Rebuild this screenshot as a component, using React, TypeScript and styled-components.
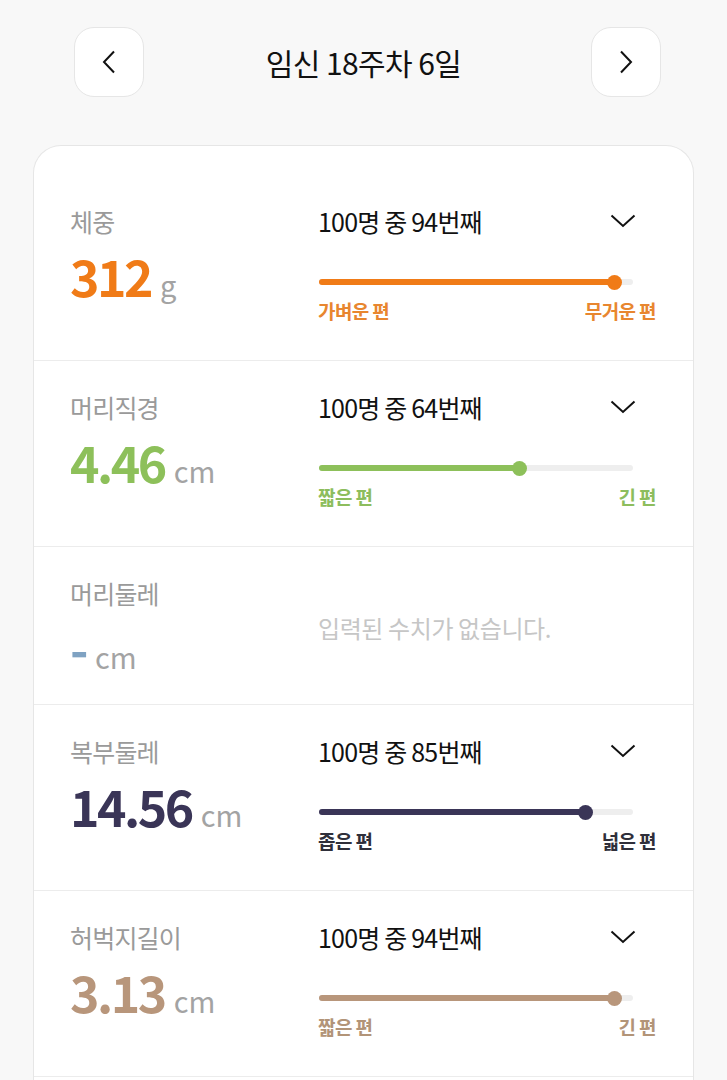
import React from "react";
import styled, { createGlobalStyle } from "styled-components";

const GlobalStyle = createGlobalStyle`
  html, body {
    margin: 0;
    padding: 0;
    background: #f8f8f8;
    font-family: "Noto Sans CJK KR", "Noto Sans", sans-serif;
    color: #111;
  }
  * { box-sizing: border-box; }
`;

const Page = styled.div`
  width: 727px;
  min-height: 1080px;
  overflow: hidden;
`;

const Header = styled.header`
  display: flex;
  align-items: center;
  justify-content: space-between;
  padding: 27px 66px 0 74px;
`;

const NavButton = styled.button`
  width: 70px;
  height: 70px;
  border-radius: 20px;
  background: #ffffff;
  border: 1.5px solid #e6e6e6;
  display: flex;
  align-items: center;
  justify-content: center;
  padding: 0;
  cursor: pointer;
`;

const Title = styled.h1`
  margin: 0 8px 0 0;
  font-size: 30px;
  font-weight: 400;
  letter-spacing: -0.6px;
  color: #111;
  line-height: 40px;
`;

const Card = styled.section`
  margin: 48px 0 0 33px;
  width: 661px;
  background: #ffffff;
  border: 1.5px solid #e6e6e6;
  border-bottom: none;
  border-radius: 28px 28px 0 0;
  padding: 29px 0 60px;
`;

const Row = styled.div`
  display: grid;
  grid-template-columns: 248px 1fr;
  padding: 29px 37px 26px 36px;
  border-bottom: 1.5px solid #ececec;
`;

const LeftCol = styled.div`
  display: flex;
  flex-direction: column;
`;

const Label = styled.div`
  font-size: 25px;
  letter-spacing: -0.8px;
  line-height: 34px;
  color: #9a9a9a;
`;

const ValueLine = styled.div`
  margin-top: 15px;
  display: flex;
  align-items: baseline;
  gap: 9px;
  line-height: 44px;
`;

const Value = styled.span<{ $color: string }>`
  font-size: 50px;
  font-weight: 700;
  letter-spacing: -2.5px;
  color: ${(p) => p.$color};
`;

const Unit = styled.span`
  font-size: 29px;
  font-weight: 400;
  color: #a3a3a3;
`;

const RightCol = styled.div`
  display: flex;
  flex-direction: column;
  padding-bottom: 10px;
`;

const RankHeader = styled.div`
  display: flex;
  align-items: center;
  justify-content: space-between;
  height: 34px;
  padding-right: 20px;
`;

const RankText = styled.span`
  font-size: 25px;
  letter-spacing: -0.8px;
  color: #111;
`;

const TrackWrap = styled.div`
  margin-top: 34px;
  height: 20px;
  display: flex;
  align-items: center;
  padding-left: 1px;
  padding-right: 23px;
`;

const Track = styled.div`
  position: relative;
  flex: 1;
  height: 6px;
  border-radius: 3px;
  background: #eeeeee;
`;

const Fill = styled.div<{ $color: string }>`
  position: absolute;
  left: 0;
  top: 0;
  height: 6px;
  border-radius: 3px;
  background: ${(p) => p.$color};
`;

const Knob = styled.div<{ $color: string }>`
  position: absolute;
  top: 50%;
  width: 15px;
  height: 15px;
  margin: -7.5px 0 0 -7.5px;
  border-radius: 50%;
  background: ${(p) => p.$color};
`;

const Ends = styled.div<{ $color: string }>`
  margin-top: 6px;
  display: flex;
  justify-content: space-between;
  font-size: 19px;
  font-weight: 700;
  letter-spacing: -0.6px;
  line-height: 26px;
  color: ${(p) => p.$color};
`;

const Empty = styled.div`
  align-self: center;
  font-size: 24px;
  letter-spacing: -0.4px;
  color: #c6c6c6;
`;

const ChevronLeft = () => (
  <svg width="14" height="24" viewBox="0 0 14 24" fill="none">
    <path d="M12 1.5 L2 12 L12 22.5" stroke="#111" strokeWidth="2" strokeLinejoin="miter" />
  </svg>
);

const ChevronRight = () => (
  <svg width="14" height="24" viewBox="0 0 14 24" fill="none">
    <path d="M2 1.5 L12 12 L2 22.5" stroke="#111" strokeWidth="2" strokeLinejoin="miter" />
  </svg>
);

const ChevronDown = () => (
  <svg width="26" height="14" viewBox="0 0 26 14" fill="none">
    <path d="M1.5 1.5 L13 12 L24.5 1.5" stroke="#111" strokeWidth="2" />
  </svg>
);

type Metric = {
  label: string;
  value: string;
  unit: string;
  color: string;
  endColor?: string;
  rank?: number;
  low?: string;
  high?: string;
};

const metrics: Metric[] = [
  { label: "체중", value: "312", unit: "g", color: "#f07b17", endColor: "#e8862f", rank: 94, low: "가벼운 편", high: "무거운 편" },
  { label: "머리직경", value: "4.46", unit: "cm", color: "#8dc05a", endColor: "#8dbd5d", rank: 64, low: "짧은 편", high: "긴 편" },
  { label: "머리둘레", value: "-", unit: "cm", color: "#7fa2c2" },
  { label: "복부둘레", value: "14.56", unit: "cm", color: "#3a3557", endColor: "#2f2f3a", rank: 85, low: "좁은 편", high: "넓은 편" },
  { label: "허벅지길이", value: "3.13", unit: "cm", color: "#b8967b", endColor: "#b29478", rank: 94, low: "짧은 편", high: "긴 편" },
];

const MetricRow = ({ m }: { m: Metric }) => (
  <Row>
    <LeftCol>
      <Label>{m.label}</Label>
      <ValueLine>
        <Value $color={m.color}>{m.value}</Value>
        <Unit>{m.unit}</Unit>
      </ValueLine>
    </LeftCol>
    {m.rank !== undefined ? (
      <RightCol>
        <RankHeader>
          <RankText>100명 중 {m.rank}번째</RankText>
          <ChevronDown />
        </RankHeader>
        <TrackWrap>
          <Track>
            <Fill $color={m.color} style={{ width: `${m.rank}%` }} />
            <Knob $color={m.color} style={{ left: `${m.rank}%` }} />
          </Track>
        </TrackWrap>
        <Ends $color={m.endColor || m.color}>
          <span>{m.low}</span>
          <span>{m.high}</span>
        </Ends>
      </RightCol>
    ) : (
      <Empty>입력된 수치가 없습니다.</Empty>
    )}
  </Row>
);

export default function App() {
  return (
    <Page>
      <GlobalStyle />
      <Header>
        <NavButton aria-label="이전">
          <ChevronLeft />
        </NavButton>
        <Title>임신 18주차 6일</Title>
        <NavButton aria-label="다음">
          <ChevronRight />
        </NavButton>
      </Header>
      <Card>
        {metrics.map((m) => (
          <MetricRow key={m.label} m={m} />
        ))}
      </Card>
    </Page>
  );
}
